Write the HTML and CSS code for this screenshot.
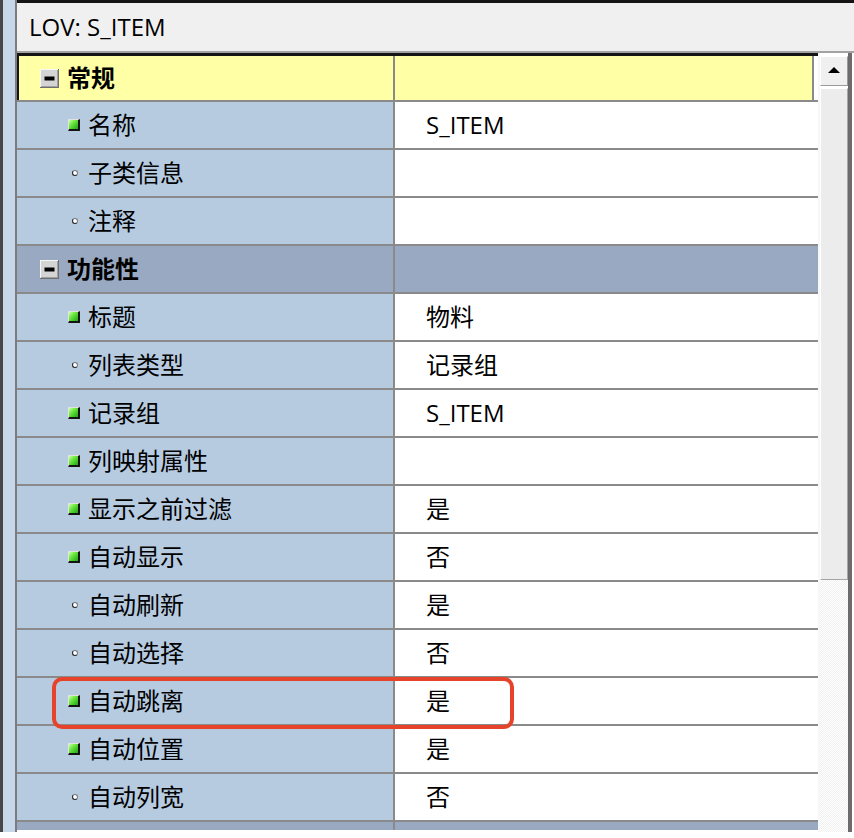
FILE: index.html
```html
<!DOCTYPE html>
<html lang="zh">
<head>
<meta charset="utf-8">
<title>LOV: S_ITEM</title>
<link rel="stylesheet" href="styles.css">
</head>
<body>
<div class="window">
  <div class="edge"></div>
  <div class="panel">
    <div class="title">LOV: S_ITEM</div>
    <div class="body">
      <div class="grid">
        <div class="row group focus">
          <div class="name"><svg class="tog" width="19" height="19" viewBox="0 0 19 19"><rect x="0" y="0" width="19" height="19" fill="#6e6e6e"/><rect x="0" y="0" width="18" height="18" fill="#f6f6f6"/><rect x="1" y="1" width="17" height="17" fill="#a0a0a0"/><rect x="1" y="1" width="16" height="16" fill="#d4d4d4"/><rect x="4.5" y="7.5" width="10" height="4" fill="#000"/></svg><span>常规</span></div>
          <div class="val"></div>
        </div>
        <div class="row"><div class="name"><span class="ico sq"></span><span>名称</span></div><div class="val">S_ITEM</div></div>
        <div class="row"><div class="name"><span class="ico dot"></span><span>子类信息</span></div><div class="val"></div></div>
        <div class="row"><div class="name"><span class="ico dot"></span><span>注释</span></div><div class="val"></div></div>
        <div class="row group">
          <div class="name"><svg class="tog" width="19" height="19" viewBox="0 0 19 19"><rect x="0" y="0" width="19" height="19" fill="#6e6e6e"/><rect x="0" y="0" width="18" height="18" fill="#f6f6f6"/><rect x="1" y="1" width="17" height="17" fill="#a0a0a0"/><rect x="1" y="1" width="16" height="16" fill="#d4d4d4"/><rect x="4.5" y="7.5" width="10" height="4" fill="#000"/></svg><span>功能性</span></div>
          <div class="val"></div>
        </div>
        <div class="row"><div class="name"><span class="ico sq"></span><span>标题</span></div><div class="val">物料</div></div>
        <div class="row"><div class="name"><span class="ico dot"></span><span>列表类型</span></div><div class="val">记录组</div></div>
        <div class="row"><div class="name"><span class="ico sq"></span><span>记录组</span></div><div class="val">S_ITEM</div></div>
        <div class="row"><div class="name"><span class="ico sq"></span><span>列映射属性</span></div><div class="val"></div></div>
        <div class="row"><div class="name"><span class="ico sq"></span><span>显示之前过滤</span></div><div class="val">是</div></div>
        <div class="row"><div class="name"><span class="ico sq"></span><span>自动显示</span></div><div class="val">否</div></div>
        <div class="row"><div class="name"><span class="ico dot"></span><span>自动刷新</span></div><div class="val">是</div></div>
        <div class="row"><div class="name"><span class="ico dot"></span><span>自动选择</span></div><div class="val">否</div></div>
        <div class="row"><div class="name"><span class="ico sq"></span><span>自动跳离</span></div><div class="val">是</div></div>
        <div class="row"><div class="name"><span class="ico sq"></span><span>自动位置</span></div><div class="val">是</div></div>
        <div class="row"><div class="name"><span class="ico dot"></span><span>自动列宽</span></div><div class="val">否</div></div>
        <div class="row group tail"><div class="name"></div><div class="val"></div></div>
      </div>
      <div class="scroll">
        <div class="btn"><span class="arrow"></span></div>
        <div class="thumb"></div>
        <div class="track"></div>
      </div>
    </div>
  </div>
  <div class="mark"></div>
</div>
</body>
</html>
```

FILE: styles.css
```css
html, body {
  margin: 0;
  padding: 0;
  background: #ffffff;
}

body {
  font-family: "Open Sans", "Noto Sans CJK SC", sans-serif;
  font-size: 24px;
  color: #000;
}

.window {
  position: relative;
  display: flex;
  width: 854px;
  height: 832px;
  overflow: hidden;
}

.edge {
  width: 12px;
  flex: none;
  border-left: 3px solid #474747;
  background: #c6d7ea;
}

.panel {
  flex: 1;
  display: flex;
  flex-direction: column;
  border-left: 2px solid #7c7c7c;
  min-width: 0;
}

.title {
  height: 48px;
  flex: none;
  border-top: 3px solid #141414;
  border-bottom: 2px solid #a3a3a3;
  background: #f0f0f0;
  padding-left: 12px;
  display: flex;
  align-items: center;
  font-size: 24px;
  line-height: 1;
}

.body {
  flex: 1;
  display: flex;
  padding-right: 2px;
  min-height: 0;
}

.grid {
  width: 801px;
  flex: none;
  display: flex;
  flex-direction: column;
}

.row {
  display: flex;
  height: 46px;
  flex: none;
  border-bottom: 2px solid #8a8a8a;
}

.name {
  width: 378px;
  flex: none;
  box-sizing: border-box;
  border-right: 2px solid #8a8a8a;
  background: #b6cbe0;
  display: flex;
  align-items: center;
  padding-left: 51px;
  gap: 8px;
  line-height: 1;
}

.val {
  flex: 1;
  background: #ffffff;
  display: flex;
  align-items: center;
  padding-left: 31px;
  line-height: 1;
}

.group .name,
.group .val {
  background: #99a9c1;
}

.group .name {
  padding-left: 23px;
  gap: 8px;
  font-weight: bold;
}

.focus {
  height: 44px;
  border-top: 3px solid #151515;
}

.focus .name,
.focus .val {
  background: #ffffa6;
}

.focus .name {
  box-shadow: inset 2px 0 0 #151515;
}

.focus .val {
  box-shadow: inset -4px 0 0 #ffffff, inset -6px 0 0 #8a8a8a;
}

.tail {
  height: 8px;
  border-bottom: 0;
}

.tog {
  display: block;
  flex: none;
}

.ico {
  width: 12px;
  height: 12px;
  flex: none;
  position: relative;
  display: block;
}

.sq::before {
  content: "";
  position: absolute;
  left: 0;
  top: 0;
  width: 9px;
  height: 9px;
  background: linear-gradient(135deg, #d2ffa8 0%, #6ae63e 40%, #22a416 100%);
  border-top: 1px solid #e2e2e2;
  border-left: 1px solid #e2e2e2;
  border-right: 2px solid #141414;
  border-bottom: 2px solid #141414;
}

.dot::before {
  content: "";
  position: absolute;
  left: 4px;
  top: 3px;
  width: 4px;
  height: 4px;
  border-radius: 50%;
  background: #ffffff;
  border: 1.5px solid #222;
  border-top-color: #7a7a7a;
  border-right-color: #7a7a7a;
}

.scroll {
  width: 28px;
  flex: none;
  display: flex;
  flex-direction: column;
  border-left: 2px solid #f7f7f7;
  border-right: 4px solid #6c6c6c;
  padding-top: 3px;
  background: #ffffff;
}

.btn {
  height: 30px;
  flex: none;
  box-sizing: border-box;
  background: #f0f0f0;
  border: 1px solid;
  border-color: #ffffff #9a9a9a #9a9a9a #ffffff;
  display: flex;
  align-items: center;
  justify-content: center;
}

.arrow {
  width: 0;
  height: 0;
  border-left: 6px solid transparent;
  border-right: 6px solid transparent;
  border-bottom: 6px solid #000;
  margin-top: -2px;
}

.thumb {
  height: 492px;
  flex: none;
  margin-top: 2px;
  box-sizing: border-box;
  background: #ececec;
  border: 1px solid;
  border-color: #ffffff #a6a6a6 #a6a6a6 #ffffff;
}

.track {
  flex: 1;
  background-color: #ffffff;
  background-image: repeating-conic-gradient(#f1f1f1 0 25%, #ffffff 0 50%);
  background-size: 2px 2px;
}

.mark {
  position: absolute;
  left: 52px;
  top: 677px;
  width: 454px;
  height: 44px;
  border: 4px solid #e6432b;
  border-radius: 10px;
}
```
